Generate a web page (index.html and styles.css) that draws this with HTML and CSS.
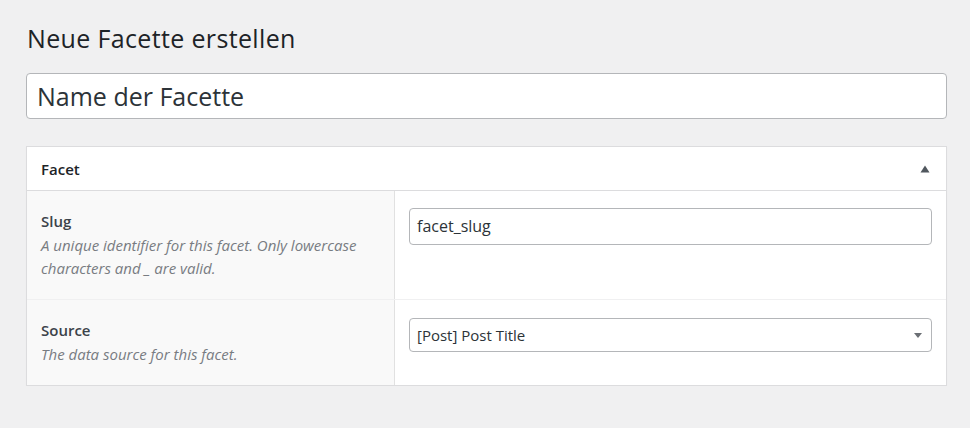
FILE: index.html
```html
<!DOCTYPE html>
<html lang="de">
<head>
    <meta charset="UTF-8" />
    <meta name="viewport" content="width=device-width, initial-scale=1.0"/>
    <title>Neue Facette erstellen</title>
    <link rel="stylesheet" href="styles.css">
</head>
<body>

    <div class="wrap">

        <!-- Page title -->
        <h1 class="page-title">Neue Facette erstellen</h1>

        <div class="title-field">Name der Facette</div>

        <!-- Facet settings box -->
        <div class="postbox">
            <div class="postbox-header">
                <h2>Facet</h2>
                <svg class="toggle" width="10" height="8" viewBox="0 0 10 8"><path d="M5 0.5 L9.5 7.5 L0.5 7.5 Z" fill="#50575e"/></svg>
            </div>

            <div class="field-row">
                <div class="field-label">
                    <label>Slug</label>
                    <p class="description">A unique identifier for this facet. Only lowercase characters and _ are valid.</p>
                </div>
                <div class="field-input">
                    <div class="text-input">facet_slug</div>
                </div>
            </div>

            <div class="field-row">
                <div class="field-label">
                    <label>Source</label>
                    <p class="description">The data source for this facet.</p>
                </div>
                <div class="field-input">
                    <div class="select-input">
                        <span>[Post] Post Title</span>
                        <svg class="caret" width="8" height="5" viewBox="0 0 8 5"><path d="M0 0 L8 0 L4 5 Z" fill="#6b6f74"/></svg>
                    </div>
                </div>
            </div>
        </div>

    </div>

</body>
</html>
```

FILE: styles.css
```css
body {
    margin: 0;
    padding: 0;
    background: #f0f0f1;
    font-family: 'Open Sans', 'Noto Sans', sans-serif;
    color: #3c434a;
}

.wrap {
    padding: 19px 23px 0 26px;
}

.page-title {
    margin: 0 0 16px 1px;
    font-size: 25px;
    font-weight: 400;
    line-height: 38px;
    letter-spacing: 0.35px;
    color: #1d2327;
}

.title-field {
    height: 44px;
    border: 1px solid #b4b6b9;
    border-radius: 4px;
    background: #fff;
    padding: 0 10px;
    font-size: 25px;
    line-height: 44px;
    color: #2c3338;
}

/* Postbox */
.postbox {
    margin-top: 27px;
    background: #fff;
    border: 1px solid #dcdcde;
    box-shadow: 0 1px 1px rgba(0,0,0,0.04);
}

.postbox-header {
    display: flex;
    justify-content: space-between;
    align-items: center;
    height: 43px;
    padding: 0 16px 0 14px;
    border-bottom: 1px solid #dcdcde;
}

.postbox-header h2 {
    margin: 0;
    font-size: 15px;
    font-weight: 600;
    color: #1d2327;
}

.toggle {
    display: block;
    margin-top: 1px;
}

.field-row {
    display: flex;
    border-top: 1px solid #f0f0f1;
}

.postbox-header + .field-row {
    border-top: none;
}

.field-label {
    width: 339px;
    flex-shrink: 0;
    background: #f9f9f9;
    border-right: 1px solid #e1e1e1;
    padding: 19px 14px 19px 14px;
}

.field-label label {
    display: block;
    font-size: 15px;
    font-weight: 600;
    line-height: 22px;
    color: #3c434a;
}

.description {
    margin: 2px 0 0;
    font-size: 15px;
    font-style: italic;
    line-height: 23px;
    color: #787c82;
}

.field-input {
    flex: 1;
    padding: 17px 14px 16px 14px;
}

.text-input,
.select-input {
    border: 1px solid #b4b6b9;
    border-radius: 4px;
    background: #fff;
    padding: 0 7px;
    color: #2c3338;
}

.text-input {
    height: 35px;
    line-height: 35px;
    font-size: 16px;
}

.select-input {
    display: flex;
    justify-content: space-between;
    align-items: center;
    height: 32px;
    margin-top: 1px;
    font-size: 15px;
}

.caret {
    display: block;
    margin-right: 2px;
}
```
